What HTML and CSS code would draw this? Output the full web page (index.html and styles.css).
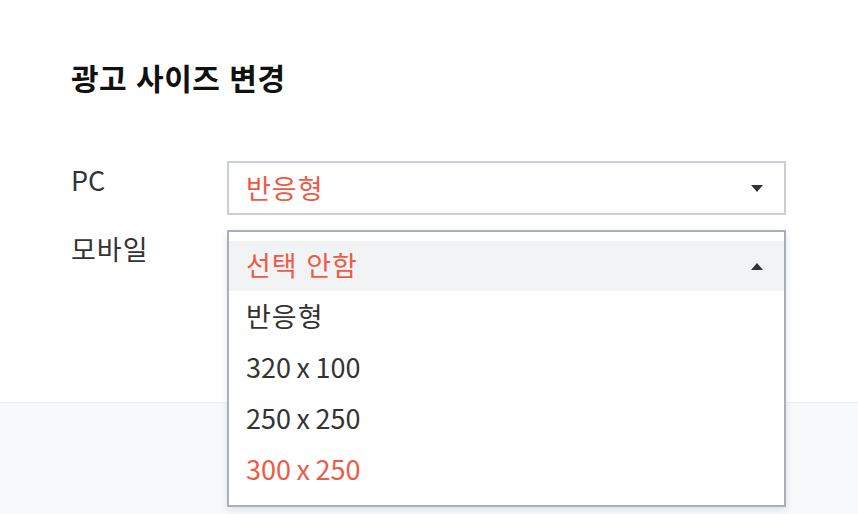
FILE: index.html
```html
<!DOCTYPE html>
<html lang="ko">
<head>
<meta charset="utf-8">
<link rel="stylesheet" href="styles.css">
</head>
<body>
<div class="modal">
  <div class="modal-body">
    <h2 class="title">광고 사이즈 변경</h2>
    <div class="form">
      <div class="row">
        <div class="label">PC</div>
        <div class="select">
          <span class="value ko">반응형</span>
          <svg class="caret" width="12" height="7" viewBox="0 0 12 7"><path d="M0 0H12L6 7Z" fill="#333"/></svg>
        </div>
      </div>
      <div class="row">
        <div class="label ko">모바일</div>
        <div class="dropdown">
          <div class="menu">
            <div class="option current">
              <span class="value ko">선택 안함</span>
              <svg class="caret" width="12" height="7" viewBox="0 0 12 7"><path d="M0 7H12L6 0Z" fill="#333"/></svg>
            </div>
            <div class="option ko">반응형</div>
            <div class="option num">320 x 100</div>
            <div class="option num">250 x 250</div>
            <div class="option num selected">300 x 250</div>
          </div>
        </div>
      </div>
    </div>
  </div>
  <div class="modal-footer"></div>
</div>
</body>
</html>
```

FILE: styles.css
```css
html, body {
  margin: 0;
  padding: 0;
  background: #ffffff;
}
body {
  font-family: "Noto Sans CJK KR", "Noto Sans", sans-serif;
  color: #333333;
  width: 858px;
  height: 514px;
  overflow: hidden;
}
.modal {
  display: flex;
  flex-direction: column;
  height: 514px;
}
.modal-body {
  height: 402px;
  padding: 57px 0 0 71px;
  box-sizing: border-box;
}
.title {
  margin: 0;
  font-size: 30px;
  line-height: 40px;
  font-weight: 700;
  letter-spacing: 0.5px;
  color: #111111;
}
.form {
  margin-top: 64px;
  display: flex;
  flex-direction: column;
  gap: 15px;
}
.row {
  display: flex;
  align-items: flex-start;
}
.label {
  width: 156px;
  font-size: 27px;
  line-height: 38px;
  color: #333333;
}
.ko {
  letter-spacing: 1px;
}
.num {
  word-spacing: -2px;
}
.select {
  width: 559px;
  height: 54px;
  box-sizing: border-box;
  border: 2px solid #cbcfda;
  display: flex;
  align-items: center;
  justify-content: space-between;
  padding: 0 21px 2px 17px;
  background: #fff;
}
.select .caret {
  margin-top: 2px;
}
.value {
  font-size: 27px;
  color: #ef5a45;
}
.dropdown {
  position: relative;
  width: 559px;
  height: 54px;
}
.menu {
  position: absolute;
  top: 0;
  left: 0;
  width: 559px;
  box-sizing: border-box;
  border: 2px solid #a9aebb;
  background: #ffffff;
  padding: 9px 0 10px;
  box-shadow: 0 3px 8px rgba(0, 0, 0, 0.10);
  z-index: 2;
}
.option {
  height: 51px;
  box-sizing: border-box;
  display: flex;
  align-items: center;
  justify-content: space-between;
  padding: 0 21px 3px 17px;
  font-size: 27px;
  color: #333333;
}
.option .caret {
  margin-top: 3px;
}
.option.current {
  background: #f2f3f5;
  height: 50px;
}
.option.selected {
  color: #ef5a45;
}
.modal-footer {
  flex: 1;
  background: #f8f9fb;
  border-top: 1px solid #eef0f3;
}
```
